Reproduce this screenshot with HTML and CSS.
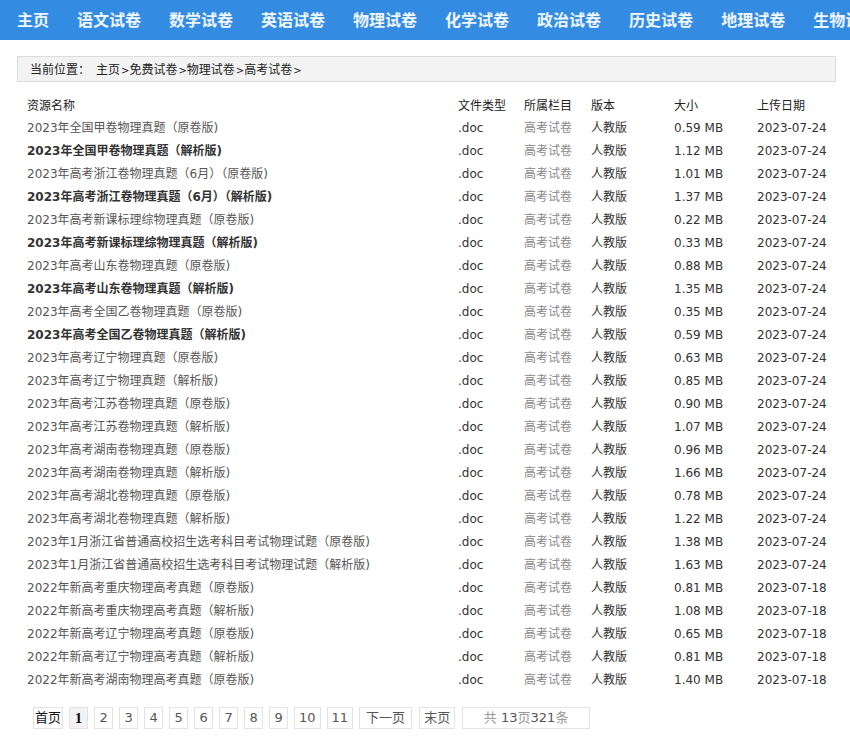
FILE: index.html
```html
<!DOCTYPE html>
<html lang="zh-CN">
<head>
<meta charset="utf-8">
<title>高考试卷 - 物理试卷</title>
<link rel="stylesheet" href="styles.css">
</head>
<body>
<nav class="nav">
  <a>主页</a><a>语文试卷</a><a>数学试卷</a><a>英语试卷</a><a>物理试卷</a><a>化学试卷</a><a>政治试卷</a><a>历史试卷</a><a>地理试卷</a><a>生物试卷</a>
</nav>
<div class="wrap">
  <div class="crumb"><span class="lbl">当前位置：</span>主页<i>&gt;</i>免费试卷<i>&gt;</i>物理试卷<i>&gt;</i>高考试卷<i>&gt;</i></div>
  <div class="list">
    <div class="row head"><span>资源名称</span><span>文件类型</span><span>所属栏目</span><span>版本</span><span>大小</span><span>上传日期</span></div>
    <div class="row"><a class="name">2023年全国甲卷物理真题（原卷版)</a><span>.doc</span><span class="cat">高考试卷</span><span>人教版</span><span>0.59 MB</span><span>2023-07-24</span></div>
    <div class="row"><a class="name b">2023年全国甲卷物理真题（解析版)</a><span>.doc</span><span class="cat">高考试卷</span><span>人教版</span><span>1.12 MB</span><span>2023-07-24</span></div>
    <div class="row"><a class="name">2023年高考浙江卷物理真题（6月）（原卷版)</a><span>.doc</span><span class="cat">高考试卷</span><span>人教版</span><span>1.01 MB</span><span>2023-07-24</span></div>
    <div class="row"><a class="name b">2023年高考浙江卷物理真题（6月）（解析版)</a><span>.doc</span><span class="cat">高考试卷</span><span>人教版</span><span>1.37 MB</span><span>2023-07-24</span></div>
    <div class="row"><a class="name">2023年高考新课标理综物理真题（原卷版)</a><span>.doc</span><span class="cat">高考试卷</span><span>人教版</span><span>0.22 MB</span><span>2023-07-24</span></div>
    <div class="row"><a class="name b">2023年高考新课标理综物理真题（解析版)</a><span>.doc</span><span class="cat">高考试卷</span><span>人教版</span><span>0.33 MB</span><span>2023-07-24</span></div>
    <div class="row"><a class="name">2023年高考山东卷物理真题（原卷版)</a><span>.doc</span><span class="cat">高考试卷</span><span>人教版</span><span>0.88 MB</span><span>2023-07-24</span></div>
    <div class="row"><a class="name b">2023年高考山东卷物理真题（解析版)</a><span>.doc</span><span class="cat">高考试卷</span><span>人教版</span><span>1.35 MB</span><span>2023-07-24</span></div>
    <div class="row"><a class="name">2023年高考全国乙卷物理真题（原卷版)</a><span>.doc</span><span class="cat">高考试卷</span><span>人教版</span><span>0.35 MB</span><span>2023-07-24</span></div>
    <div class="row"><a class="name b">2023年高考全国乙卷物理真题（解析版)</a><span>.doc</span><span class="cat">高考试卷</span><span>人教版</span><span>0.59 MB</span><span>2023-07-24</span></div>
    <div class="row"><a class="name">2023年高考辽宁物理真题（原卷版)</a><span>.doc</span><span class="cat">高考试卷</span><span>人教版</span><span>0.63 MB</span><span>2023-07-24</span></div>
    <div class="row"><a class="name">2023年高考辽宁物理真题（解析版)</a><span>.doc</span><span class="cat">高考试卷</span><span>人教版</span><span>0.85 MB</span><span>2023-07-24</span></div>
    <div class="row"><a class="name">2023年高考江苏卷物理真题（原卷版)</a><span>.doc</span><span class="cat">高考试卷</span><span>人教版</span><span>0.90 MB</span><span>2023-07-24</span></div>
    <div class="row"><a class="name">2023年高考江苏卷物理真题（解析版)</a><span>.doc</span><span class="cat">高考试卷</span><span>人教版</span><span>1.07 MB</span><span>2023-07-24</span></div>
    <div class="row"><a class="name">2023年高考湖南卷物理真题（原卷版)</a><span>.doc</span><span class="cat">高考试卷</span><span>人教版</span><span>0.96 MB</span><span>2023-07-24</span></div>
    <div class="row"><a class="name">2023年高考湖南卷物理真题（解析版)</a><span>.doc</span><span class="cat">高考试卷</span><span>人教版</span><span>1.66 MB</span><span>2023-07-24</span></div>
    <div class="row"><a class="name">2023年高考湖北卷物理真题（原卷版)</a><span>.doc</span><span class="cat">高考试卷</span><span>人教版</span><span>0.78 MB</span><span>2023-07-24</span></div>
    <div class="row"><a class="name">2023年高考湖北卷物理真题（解析版)</a><span>.doc</span><span class="cat">高考试卷</span><span>人教版</span><span>1.22 MB</span><span>2023-07-24</span></div>
    <div class="row"><a class="name">2023年1月浙江省普通高校招生选考科目考试物理试题（原卷版)</a><span>.doc</span><span class="cat">高考试卷</span><span>人教版</span><span>1.38 MB</span><span>2023-07-24</span></div>
    <div class="row"><a class="name">2023年1月浙江省普通高校招生选考科目考试物理试题（解析版)</a><span>.doc</span><span class="cat">高考试卷</span><span>人教版</span><span>1.63 MB</span><span>2023-07-24</span></div>
    <div class="row"><a class="name">2022年新高考重庆物理高考真题（原卷版)</a><span>.doc</span><span class="cat">高考试卷</span><span>人教版</span><span>0.81 MB</span><span>2023-07-18</span></div>
    <div class="row"><a class="name">2022年新高考重庆物理高考真题（解析版)</a><span>.doc</span><span class="cat">高考试卷</span><span>人教版</span><span>1.08 MB</span><span>2023-07-18</span></div>
    <div class="row"><a class="name">2022年新高考辽宁物理高考真题（原卷版)</a><span>.doc</span><span class="cat">高考试卷</span><span>人教版</span><span>0.65 MB</span><span>2023-07-18</span></div>
    <div class="row"><a class="name">2022年新高考辽宁物理高考真题（解析版)</a><span>.doc</span><span class="cat">高考试卷</span><span>人教版</span><span>0.81 MB</span><span>2023-07-18</span></div>
    <div class="row"><a class="name">2022年新高考湖南物理高考真题（原卷版)</a><span>.doc</span><span class="cat">高考试卷</span><span>人教版</span><span>1.40 MB</span><span>2023-07-18</span></div>
  </div>
  <div class="pager">
    <a class="pg first">首页</a><b class="pg cur">1</b><a class="pg">2</a><a class="pg">3</a><a class="pg">4</a><a class="pg">5</a><a class="pg">6</a><a class="pg">7</a><a class="pg">8</a><a class="pg">9</a><a class="pg">10</a><a class="pg">11</a><a class="pg next">下一页</a><a class="pg last">末页</a><span class="pg info">共 <em>13</em>页<em>321</em>条</span>
  </div>
</div>
</body>
</html>
```

FILE: styles.css
```css
* { box-sizing: border-box; }
body {
  margin: 0;
  background: #fff;
  font-family: "DejaVu Sans", "Noto Sans CJK SC", sans-serif;
  font-size: 12px;
  color: #333;
  overflow: hidden;
}
.nav {
  height: 40px;
  background: #338be2;
  display: flex;
  align-items: center;
  padding-left: 3px;
  white-space: nowrap;
  overflow: hidden;
}
.nav a {
  flex: none;
  color: #eef6ff;
  font-family: "Noto Sans CJK SC", sans-serif;
  font-weight: bold;
  font-size: 16px;
  padding: 0 14px;
  line-height: 40px;
  margin-top: -2px;
}
.wrap {
  margin: 16px 14px 0 17px;
}
.crumb {
  height: 26px;
  background: #f3f3f3;
  border: 1px solid #dcdcdc;
  padding-left: 12px;
  line-height: 24px;
  color: #222;
  font-family: "Noto Sans CJK SC", sans-serif;
  font-size: 12px;
}
.crumb .lbl { margin-right: 6px; }
.crumb i {
  font-style: normal;
  font-family: "DejaVu Sans", sans-serif;
  font-size: 10px;
  margin: 0 0 0 1px;
}
.list {
  margin-top: 11px;
}
.row {
  display: grid;
  grid-template-columns: 431px 66px 67px 83px 83px auto;
  padding-left: 10px;
  height: 23px;
  line-height: 24px;
  white-space: nowrap;
}
.row span, .row a { overflow: hidden; }
.head {
  color: #222;
  font-family: "Noto Sans CJK SC", sans-serif;
}
.name { color: #555; }
.name.b { color: #333; font-weight: bold; }
.cat { color: #888; }
.pager {
  display: flex;
  gap: 6px;
  margin-top: 16px;
  margin-left: 16px;
  align-items: center;
}
.pg {
  display: inline-block;
  height: 22px;
  line-height: 20px;
  border: 1px solid #e3e3e3;
  padding: 0 4px;
  min-width: 19px;
  text-align: center;
  color: #555;
  font-size: 13px;
}
.pg.next { padding: 0 6px; }
.pg.last { padding: 0 4px; margin-left: 1px; }
.pg.first { color: #111; padding: 0 1px; }
.pg.cur {
  background: #f3f3f3;
  color: #111;
  font-family: "Liberation Serif", serif;
  font-size: 15px;
}
.pg.info {
  color: #999;
  padding: 0 16px;
  margin-left: 1px;
  min-width: 128px;
}
.pg.info em { font-style: normal; color: #555; }
```
